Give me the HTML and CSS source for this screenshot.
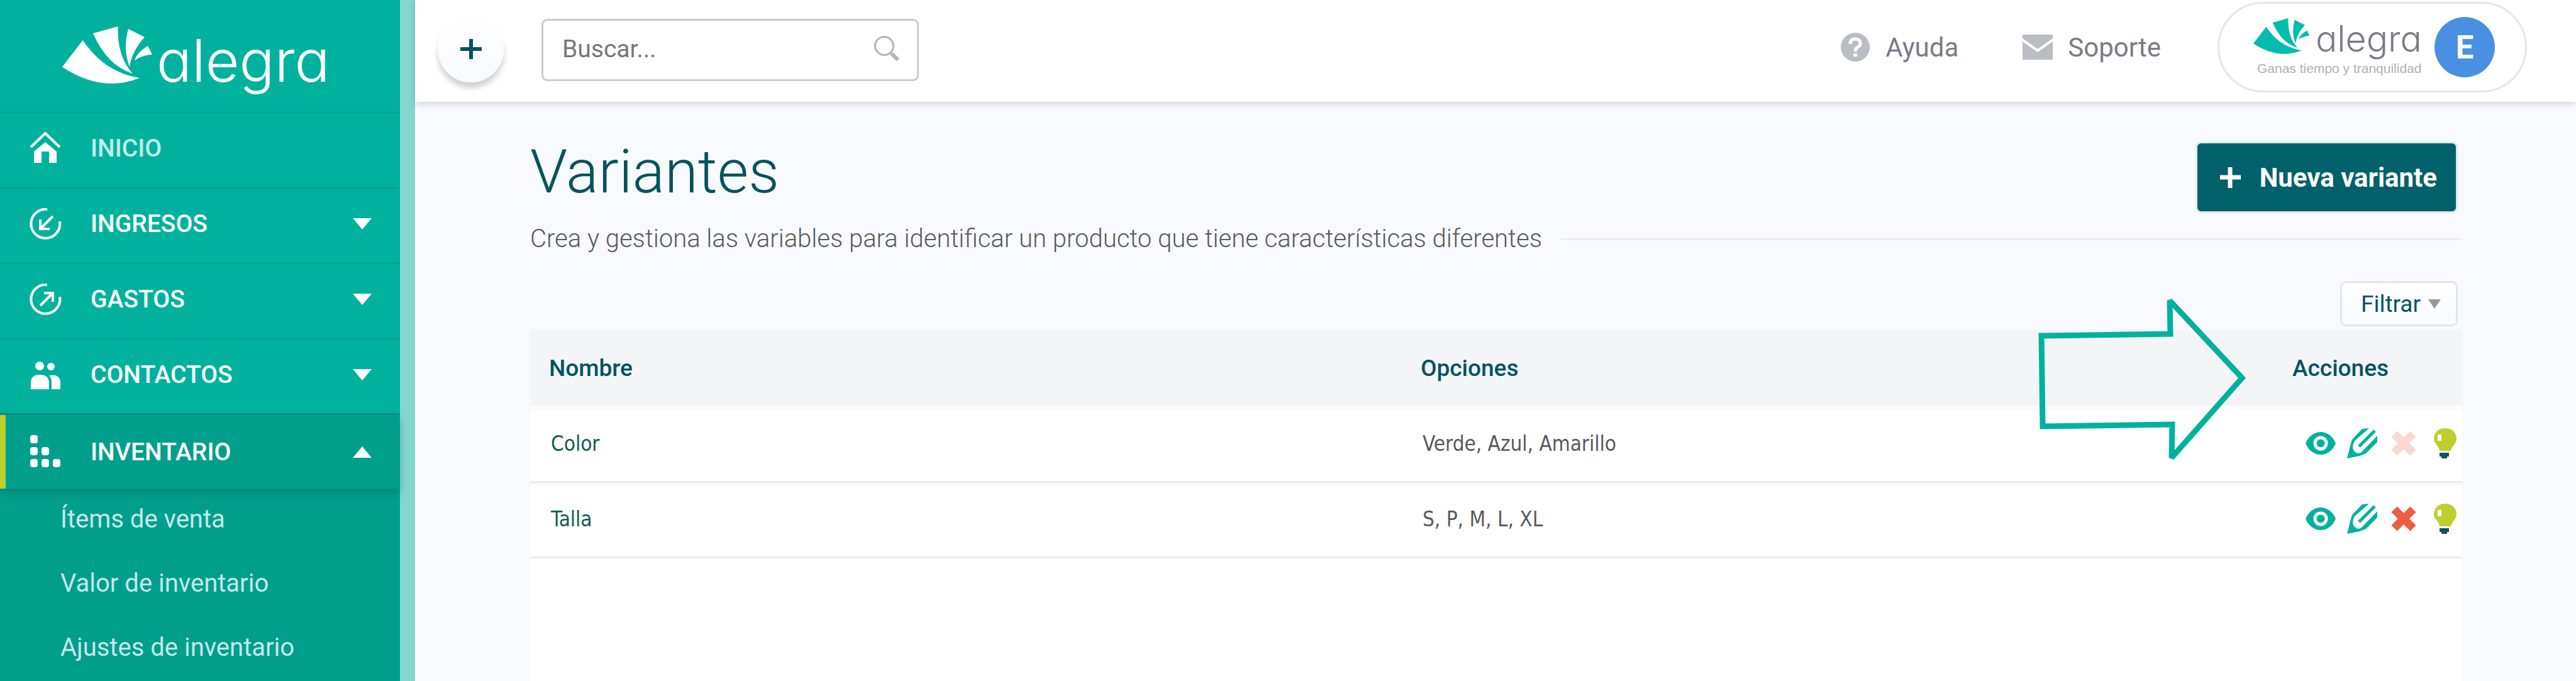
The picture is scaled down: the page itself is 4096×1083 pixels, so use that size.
FILE: index.html
```html
<!DOCTYPE html>
<html lang="es">
<head>
<meta charset="utf-8">
<title>Alegra - Variantes</title>
<link rel="stylesheet" href="styles.css">
</head>
<body>
<svg class="sprite" aria-hidden="true">
  <symbol id="fan" viewBox="0 0 144 96">
    <path d="M0 64.500L32.500 22C48 43 71 73 123 82Q63 106 0 64.500Z"/>
    <path d="M49 11L88.500 0Q87 48 112 75Q71 62 49 11Z"/>
    <path d="M105 4L131 17Q111 39 107 64Q96 36 105 4Z"/>
    <path d="M136 31L143 44.500Q126 46 115 54Q118 42 136 31Z"/>
  </symbol>
  <symbol id="eye" viewBox="0 0 48 36">
    <path fill="#00b29e" d="M0 18C10-6 38-6 48 18C38 42 10 42 0 18Z"/>
    <circle cx="24" cy="18" r="9" fill="#00b29e" stroke="#fff" stroke-width="5"/>
  </symbol>
  <symbol id="pencil" viewBox="0 0 48 48">
    <path fill="#00b29e" fill-rule="evenodd" d="M0 48L6 24L8 18L24 1L35 0L12 20Q6 32 12 37Q15 41 22 39L48 12V22L30 40L20 44Z"/>
    <path fill="none" stroke="#00b29e" stroke-width="5" d="M19 29L44 4"/>
  </symbol>
  <symbol id="cross" viewBox="0 0 42 42">
    <path fill="none" stroke="currentColor" stroke-width="13" d="M6 6L36 36M36 6L6 36"/>
  </symbol>
  <symbol id="bulb" viewBox="0 0 36 48">
    <path fill="#bccf2f" d="M18 0C29 0 36 7 36 17C36 25 29 27 27 36H9C8 27 0 25 0 17C0 7 7 0 18 0Z"/>
    <path fill="#fff" d="M6 10H12V20H6Z"/>
    <path fill="#14525e" d="M9 39H24V45H21V48H12V45H9Z"/>
  </symbol>
</svg>
<div class="app">
  <aside class="sidebar">
    <a class="brand" href="#">
      <svg class="brand-mark"><use href="#fan"/></svg>
      <span class="brand-name">alegra</span>
    </a>
    <nav>
      <a class="nav-item nav-home" href="#">
        <svg class="nav-icon" viewBox="0 0 54 54"><path fill="none" stroke="#fff" stroke-width="4" d="M4 25L27 3L50 25"/><path fill="#fff" d="M27 17L45 32V50H33V32H21V50H9V32Z"/></svg>
        <span>INICIO</span>
      </a>
      <a class="nav-item" href="#">
        <svg class="nav-icon" viewBox="0 0 54 54"><path fill="none" stroke="#fff" stroke-width="4" d="M30 4A23 23 0 1 0 50 23M39 15L20 34M19 20V35H34"/></svg>
        <span>INGRESOS</span><i class="caret"></i>
      </a>
      <a class="nav-item" href="#">
        <svg class="nav-icon" viewBox="0 0 54 54"><path fill="none" stroke="#fff" stroke-width="4" d="M30 4A23 23 0 1 0 50 23M19 37L38 18M25 17H39V31"/></svg>
        <span>GASTOS</span><i class="caret"></i>
      </a>
      <a class="nav-item" href="#">
        <svg class="nav-icon" viewBox="0 0 54 54"><g fill="#fff"><circle cx="18" cy="13" r="7"/><circle cx="36" cy="14" r="6"/><path d="M4 50V40Q4 27 18 27Q33 27 33 40V50ZM37 50V39Q37 32 33 28Q51 25 51 40V50Z"/></g></svg>
        <span>CONTACTOS</span><i class="caret"></i>
      </a>
      <a class="nav-item nav-active" href="#">
        <svg class="nav-icon" viewBox="0 0 54 54"><g fill="#fff"><rect x="3" y="0" width="12" height="13" rx="4"/><rect x="3" y="19" width="12" height="13" rx="4"/><rect x="21" y="19" width="12" height="13" rx="4"/><rect x="3" y="38" width="12" height="13" rx="4"/><rect x="21" y="38" width="12" height="13" rx="4"/><rect x="39" y="38" width="12" height="13" rx="4"/></g></svg>
        <span>INVENTARIO</span><i class="caret caret-up"></i>
      </a>
    </nav>
    <nav class="submenu">
      <a href="#">Ítems de venta</a>
      <a href="#">Valor de inventario</a>
      <a href="#">Ajustes de inventario</a>
    </nav>
  </aside>

  <div class="page">
    <header class="topbar">
      <button class="add" type="button" aria-label="Nuevo"><svg viewBox="0 0 36 36"><path fill="none" stroke="#00545e" stroke-width="6" d="M18 2V34M1 18H35"/></svg></button>
      <form class="search">
        <input type="search" placeholder="Buscar..." aria-label="Buscar">
        <button type="button" aria-label="Buscar ahora"><svg viewBox="0 0 42 42"><circle cx="17" cy="16" r="14.500" fill="none" stroke="#b5b5b5" stroke-width="3"/><path d="M28 28L39 38" stroke="#b5b5b5" stroke-width="6"/></svg></button>
      </form>
      <a class="top-link help" href="#">
        <svg viewBox="0 0 48 48"><circle cx="24" cy="24" r="23" fill="#bcbcc4"/><path fill="none" stroke="#fff" stroke-width="5" d="M16 19Q16 11 24 11Q32 11 32 18Q32 22 28 24Q24 26 24 31"/><path fill="#fff" d="M21 34H27V39H21Z"/></svg>
        Ayuda
      </a>
      <a class="top-link support" href="#">
        <svg viewBox="0 0 48 48"><path fill="#bcbcc4" d="M0 4H48V10L24 27L0 10ZM0 15L24 32L48 15V44H0Z"/></svg>
        Soporte
      </a>
      <button class="account" type="button">
        <span class="company">
          <span class="company-logo"><svg class="company-mark"><use href="#fan"/></svg><span class="company-name">alegra</span></span>
          <span class="tagline">Ganas tiempo y tranquilidad</span>
        </span>
        <span class="avatar">E</span>
      </button>
    </header>

    <main class="content">
      <div class="heading">
        <h1>Variantes</h1>
        <button class="primary" type="button"><svg viewBox="0 0 33 33"><path fill="none" stroke="#fff" stroke-width="7" d="M16 0V33M0 16H33"/></svg>Nueva variante</button>
      </div>
      <div class="subtitle">
        <p>Crea y gestiona las variables para identificar un producto que tiene características diferentes</p>
        <hr>
      </div>
      <button class="filter" type="button">Filtrar<i></i></button>
      <section class="panel">
        <table>
          <colgroup><col><col><col class="col-actions"></colgroup>
          <thead><tr><th>Nombre</th><th>Opciones</th><th>Acciones</th></tr></thead>
          <tbody>
            <tr>
              <td><a href="#">Color</a></td><td>Verde, Azul, Amarillo</td>
              <td class="actions"><div>
                <button type="button" aria-label="Ver"><svg class="i-eye"><use href="#eye"/></svg></button>
                <button type="button" aria-label="Editar"><svg class="i-pencil"><use href="#pencil"/></svg></button>
                <button type="button" aria-label="Eliminar" disabled><svg class="i-cross"><use href="#cross"/></svg></button>
                <button type="button" aria-label="Desactivar"><svg class="i-bulb"><use href="#bulb"/></svg></button>
              </div></td>
            </tr>
            <tr>
              <td><a href="#">Talla</a></td><td>S, P, M, L, XL</td>
              <td class="actions"><div>
                <button type="button" aria-label="Ver"><svg class="i-eye"><use href="#eye"/></svg></button>
                <button type="button" aria-label="Editar"><svg class="i-pencil"><use href="#pencil"/></svg></button>
                <button type="button" aria-label="Eliminar"><svg class="i-cross"><use href="#cross"/></svg></button>
                <button type="button" aria-label="Desactivar"><svg class="i-bulb"><use href="#bulb"/></svg></button>
              </div></td>
            </tr>
          </tbody>
        </table>
        <svg class="pointer" viewBox="0 0 336 270" aria-hidden="true"><path d="M6 66L211 63L210 10L325 133L213 260L214 207L8 210Z"/></svg>
      </section>
    </main>
  </div>
</div>
</body>
</html>
```
FILE: styles.css
```css
*, *::before, *::after { box-sizing: border-box; }
body { margin: 0; background: #f9faff; font-family: Roboto, sans-serif; font-size: 39px; color: #595959; }
a { color: inherit; text-decoration: none; }
button { margin: 0; padding: 0; border: 0; background: none; font: inherit; color: inherit; cursor: pointer; }
svg { display: block; flex: none; }
.sprite { position: absolute; width: 0; height: 0; }
.app { display: flex; min-height: 100vh; }

/* Sidebar */
.sidebar { flex: none; width: 660px; display: flex; flex-direction: column; background: #00b29e; border-right: 24px solid #82d8cf; color: #fff; }
.brand { display: flex; height: 180px; padding: 42px 0 0 99px; gap: 6px; border-bottom: 3px solid #00a693; }
.brand-mark { width: 144px; height: 96px; fill: #fff; }
.brand-name { font: 300 93px/108px Inter, sans-serif; font-feature-settings: "cv11"; }
.nav-item { display: flex; align-items: center; height: 120px; padding: 0 45px 6px; border-bottom: 3px solid #00a693; font-weight: 500; }
.nav-item:nth-child(4) { border-color: #009483; }
.nav-icon { width: 54px; height: 54px; margin-right: 45px; }
.nav-home { color: #c4ede8; }
.nav-active { position: relative; height: 117px; padding: 0 45px 0 36px; border-left: 9px solid #bccf2f; border-bottom: 0; background: #009f8c; box-shadow: 0 6px 12px rgba(0, 80, 70, .3); }
.caret { margin-left: auto; border: 15px solid transparent; border-top: 18px solid #fff; border-bottom: 0; }
.caret-up { border-top: 0; border-bottom: 18px solid #fff; }
.submenu { flex: 1; background: #009f8c; color: #c4e9e5; font-size: 40px; }
.submenu a { display: block; height: 102px; padding-left: 96px; line-height: 98px; }

/* Top bar */
.topbar { position: relative; display: flex; align-items: center; height: 162px; padding: 0 78px 12px 36px; background: #fff; box-shadow: 0 3px 12px rgba(0, 0, 0, .16); }
.page { flex: 1; min-width: 0; display: flex; flex-direction: column; }
.add { display: grid; place-items: center; width: 105px; height: 105px; margin-top: 6px; border-radius: 50%; background: linear-gradient(#fff, #f9faff); box-shadow: 0 9px 9px rgba(0, 0, 0, .18); }
.add svg { width: 36px; height: 36px; }
.search { display: flex; align-items: center; width: 600px; height: 99px; margin: 9px auto 0 60px; padding: 0 27px 3px 30px; border: 3px solid #ccc; border-radius: 9px; }
.search input { flex: 1; min-width: 0; padding: 0; border: 0; outline: 0; background: none; font: inherit; color: #777; }
.search input::placeholder { color: #777; opacity: 1; }
.search svg { width: 42px; height: 42px; }
.top-link { display: flex; align-items: center; gap: 24px; font-size: 42px; color: #7b7b85; }
.top-link svg { width: 48px; height: 48px; }
.help { margin-right: 102px; }
.support { margin-right: 90px; }
.account { display: flex; align-items: center; gap: 24px; width: 492px; height: 144px; padding-left: 54px; border: 3px solid #e6e6e6; border-radius: 72px; }
.company { display: flex; flex-direction: column; width: 264px; text-align: left; }
.company-logo { display: flex; gap: 9px; }
.company-mark { width: 90px; height: 60px; fill: #00bdae; }
.company-name { font: 300 57px/66px Inter, sans-serif; font-feature-settings: "cv11"; color: #7b7b85; }
.tagline { padding-left: 6px; font: 21px/27px "Liberation Sans", sans-serif; color: #b0b0b0; white-space: nowrap; }
.avatar { display: grid; place-items: center; width: 96px; height: 96px; border-radius: 50%; background: #4a90e2; color: #fff; font-size: 51px; font-weight: 700; }

/* Content */
.content { flex: 1; display: flex; flex-direction: column; padding: 63px 181px 0 183px; }
.heading { display: flex; justify-content: space-between; padding-right: 7px; }
h1 { margin: 0; font-size: 96px; font-weight: 300; line-height: 96px; color: #00545e; }
.primary { display: flex; align-items: center; gap: 30px; height: 114px; padding: 0 30px 0 36px; border: 3px solid #e6e6e6; border-radius: 9px; background: #00616b; color: #fff; font-size: 42px; font-weight: 700; }
.primary svg { width: 33px; height: 33px; }
.subtitle { display: flex; align-items: center; gap: 30px; margin-top: 18px; }
.subtitle p { margin: 0; font-size: 40px; font-weight: 300; line-height: 46px; }
.subtitle hr { flex: 1; height: 3px; margin: 0; border: 0; background: #eee; }
.filter { display: flex; align-items: center; align-self: flex-end; gap: 12px; height: 72px; margin: 44px 7px 6px 0; padding: 0 24px 0 30px; border: 3px solid #e6e6e6; border-radius: 9px; background: linear-gradient(#fff, #f9faff); font-size: 37px; color: #00545e; }
.filter i { border: 10px solid transparent; border-top: 15px solid #999; border-bottom: 0; }
.panel { position: relative; flex: 1; background: #fff; }
table { width: 100%; table-layout: fixed; border-collapse: separate; border-spacing: 0; }
.col-actions { width: 300px; }
th { height: 123px; padding: 0 30px; border-bottom: 3px solid #fff; background: #f3f5f7; text-align: left; font-size: 37px; font-weight: 500; color: #00545e; }
td { height: 120px; padding: 0 33px 6px; border-top: 3px solid #fafafa; border-bottom: 3px solid #ececec; font-family: "DejaVu Sans Condensed", "Noto Sans", sans-serif; font-size: 33px; }
td a { color: #145c4f; }
.actions { padding: 0 0 6px 51px; }
.actions div { display: flex; gap: 18px; }
.actions button { display: grid; place-items: center; width: 48px; height: 48px; color: #eb5f41; }
.actions button:disabled { color: #fad7d2; }
.i-eye { width: 48px; height: 36px; }
.i-pencil { width: 48px; height: 48px; }
.i-cross { width: 42px; height: 42px; }
.i-bulb { width: 36px; height: 48px; }
.pointer { position: absolute; top: -57px; right: 339px; width: 336px; height: 270px; fill: none; stroke: #00b29e; stroke-width: 9px; stroke-miterlimit: 2; }
```
